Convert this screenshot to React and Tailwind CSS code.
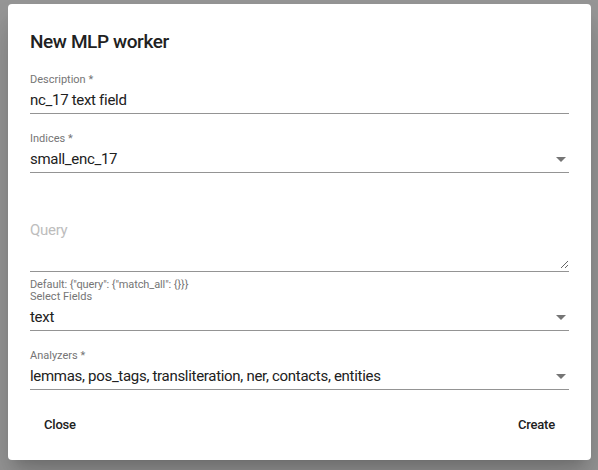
import { useState } from 'react';

const Arrow = () => (
  <span className="ml-2 h-0 w-0 border-x-[5px] border-t-[5px] border-x-transparent border-t-[#757575]" />
);

const Field = ({ label, value, select, className = '' }) => (
  <div className={`border-b border-[#949494] pb-[3px] ${className}`}>
    <div className="text-[11px] leading-[15px] text-[#757575]">{label}</div>
    <div className="mt-[3px] flex items-center justify-between pr-[3px] text-[15px] leading-[20px] tracking-[-0.3px] text-[#212121]">
      <span>{value}</span>
      {select && <Arrow />}
    </div>
  </div>
);

export default function App() {
  const [query, setQuery] = useState('');

  return (
    <div className="h-screen w-full bg-[#969696] pt-[4px] pl-[8px] pr-[7px] font-['Roboto',sans-serif]">
      <div className="h-[456px] rounded-[4px] bg-white px-[22px] pt-[22px] shadow-[0_11px_15px_-7px_rgba(0,0,0,0.2),0_24px_38px_3px_rgba(0,0,0,0.14)]">
        <h2 className="text-[19px] leading-[32px] font-medium tracking-[-0.4px] text-[#212121]">New MLP worker</h2>

        <Field className="mt-[14px]" label="Description *" value="nc_17 text field" />
        <Field className="mt-[17px]" label="Indices *" value="small_enc_17" select />

        {/* query textarea */}
        <div className="mt-[46px] border-b border-[#949494] pb-[2px]">
          <textarea
            value={query}
            onChange={(e) => setQuery(e.target.value)}
            placeholder="Query"
            className="block h-[50px] w-full resize-y pt-[1px] text-[15px] leading-[20px] tracking-[-0.3px] text-[#212121] outline-none placeholder:text-[#bdbdbd]"
          />
        </div>
        <div className="mt-[7px] text-[11px] leading-[12px] tracking-[-0.1px] text-[#757575]">
          Default: {'{"query": {"match_all": {}}}'}
        </div>

        <Field className="-mt-[2px]" label="Select Fields" value="text" select />
        <Field className="mt-[17px]" label="Analyzers *" value="lemmas, pos_tags, transliteration, ner, contacts, entities" select />

        <div className="mt-[17px] -mx-[2px] flex justify-between">
          <button className="h-[36px] rounded-[4px] px-[16px] text-[13px] font-medium tracking-[-0.2px] text-[#212121]">Close</button>
          <button className="h-[36px] rounded-[4px] px-[16px] text-[13px] font-medium tracking-[-0.2px] text-[#212121]">Create</button>
        </div>
      </div>
    </div>
  );
}
